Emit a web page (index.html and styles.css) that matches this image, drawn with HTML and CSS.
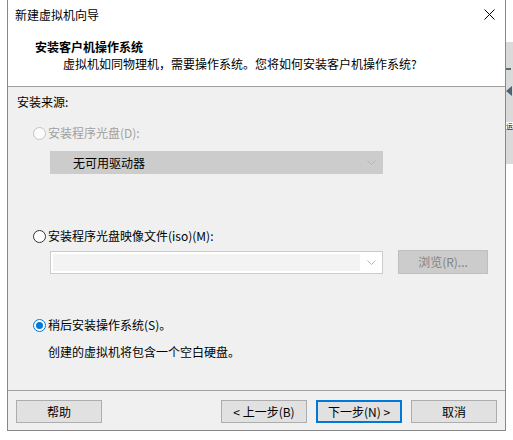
FILE: index.html
```html
<!DOCTYPE html>
<html lang="zh-CN">
<head>
<meta charset="utf-8">
<title>新建虚拟机向导</title>
<link rel="stylesheet" href="styles.css">
</head>
<body>
<div class="screen">
  <div class="dialog">
    <div class="titlebar">
      <span class="title">新建虚拟机向导</span>
      <svg class="close" width="11" height="11" viewBox="0 0 11 11"><path d="M0.5 0.5 L10.5 10.5 M10.5 0.5 L0.5 10.5" stroke="#000" stroke-width="1" fill="none"/></svg>
    </div>
    <div class="header">
      <div class="h-title">安装客户机操作系统</div>
      <div class="h-sub">虚拟机如同物理机，需要操作系统。您将如何安装客户机操作系统?</div>
    </div>
    <div class="content">
      <div class="group-label">安装来源:</div>

      <div class="radio-row r1 disabled">
        <span class="radio"></span><span>安装程序光盘(D):</span>
      </div>
      <div class="select disabled-select">
        <span class="select-text">无可用驱动器</span>
        <svg class="chev" width="9" height="5" viewBox="0 0 9 5"><path d="M0.5 0.5 L4.5 4.5 L8.5 0.5" stroke="#b4b4b4" fill="none"/></svg>
      </div>

      <div class="radio-row r2">
        <span class="radio"></span><span>安装程序光盘映像文件(iso)(M):</span>
      </div>
      <div class="combo-row">
        <div class="combo">
          <div class="combo-field"></div>
          <svg class="chev" width="9" height="5" viewBox="0 0 9 5"><path d="M0.5 0.5 L4.5 4.5 L8.5 0.5" stroke="#b4b4b4" fill="none"/></svg>
        </div>
        <div class="browse">浏览(R)...</div>
      </div>

      <div class="radio-row r3">
        <span class="radio checked"></span><span>稍后安装操作系统(S)。</span>
      </div>
      <div class="note">创建的虚拟机将包含一个空白硬盘。</div>
    </div>
    <div class="footer">
      <div class="btn">帮助</div>
      <div class="spacer"></div>
      <div class="btn">&lt; 上一步(B)</div>
      <div class="btn default">下一步(N) &gt;</div>
      <div class="btn">取消</div>
    </div>
  </div>
  <div class="backwin">
    <span class="bw-line"></span>
    <span class="bw-arrow"></span>
    <span class="bw-text">运</span>
  </div>
</div>
</body>
</html>
```

FILE: styles.css
```css
html, body {
  margin: 0;
  padding: 0;
  background: #ffffff;
}
body {
  font-family: "Noto Sans CJK SC", "Noto Sans", sans-serif;
  font-size: 12px;
  color: #000;
}
.screen {
  display: flex;
  align-items: flex-start;
  width: 513px;
  height: 440px;
  overflow: hidden;
}
.dialog {
  margin-left: 7px;
  width: 497px;
  border: 1px solid #888888;
  border-top: none;
  background: #fff;
  flex: none;
}
.titlebar {
  height: 30px;
  display: flex;
  align-items: center;
  justify-content: space-between;
  padding: 0 10px 0 7px;
  line-height: 16px;
}
.title {
  margin-top: -1px;
}
.close {
  margin-top: -1px;
}
.header {
  height: 57px;
  box-sizing: border-box;
  padding: 8px 0 0 27px;
  border-bottom: 1px solid #a0a0a0;
}
.h-title {
  font-weight: bold;
  line-height: 18px;
}
.h-sub {
  line-height: 16px;
  padding-left: 28px;
}
.content {
  height: 304px;
  box-sizing: border-box;
  background: #f0f0f0;
  border-bottom: 1px solid #a0a0a0;
  padding: 7px 0 0 9px;
  display: flex;
  flex-direction: column;
  align-items: flex-start;
}
.group-label {
  line-height: 16px;
}
.radio-row {
  display: flex;
  align-items: center;
  line-height: 16px;
  height: 16px;
  margin-left: 16px;
}
.radio-row.disabled {
  color: #a0a0a0;
}
.r1 { margin-top: 15px; }
.r2 { margin-top: 54px; }
.r3 { margin-top: 43px; }
.radio {
  width: 11px;
  height: 11px;
  border: 1px solid #333333;
  border-radius: 50%;
  background: #fff;
  margin-right: 2px;
  flex: none;
  position: relative;
}
.disabled .radio {
  border-color: #c4c4c4;
  background: #fbfbfb;
}
.radio.checked {
  border-color: #0078d7;
}
.radio.checked::after {
  content: "";
  position: absolute;
  left: 2px;
  top: 2px;
  width: 7px;
  height: 7px;
  border-radius: 50%;
  background: #0078d7;
}
.select {
  margin-top: 10px;
  margin-left: 33px;
  width: 333px;
  height: 23px;
  box-sizing: border-box;
  display: flex;
  align-items: center;
  justify-content: space-between;
  padding: 0 6px 0 22px;
}
.disabled-select {
  background: #cccccc;
  border: 1px solid #cccccc;
}
.select-text {
  line-height: 16px;
}
.combo-row {
  margin-top: 6px;
  margin-left: 33px;
  display: flex;
  align-items: flex-start;
  gap: 15px;
}
.combo {
  margin-top: 1px;
  width: 333px;
  height: 23px;
  box-sizing: border-box;
  border: 1px solid #cccccc;
  background: #ffffff;
  display: flex;
  align-items: center;
  padding: 2px 6px 2px 2px;
  gap: 0;
}
.combo-field {
  width: 310px;
  height: 17px;
  background: #f3f3f3;
  margin-right: 7px;
}
.browse {
  width: 90px;
  height: 24px;
  box-sizing: border-box;
  background: #cccccc;
  border: 1px solid #bfbfbf;
  color: #838383;
  display: flex;
  align-items: center;
  justify-content: center;
  line-height: 16px;
}
.note {
  margin-top: 11px;
  margin-left: 31px;
  line-height: 16px;
}
.footer {
  height: 39px;
  box-sizing: border-box;
  background: #f0f0f0;
  padding: 9px 8px 0 8px;
  display: flex;
  align-items: flex-start;
  gap: 9px;
}
.spacer {
  flex: 1;
}
.btn {
  width: 86px;
  height: 23px;
  box-sizing: border-box;
  background: #e1e1e1;
  border: 1px solid #adadad;
  display: flex;
  align-items: center;
  justify-content: center;
  line-height: 16px;
}
.btn.default {
  border: 2px solid #0078d7;
}
.backwin {
  margin-top: 42px;
  width: 8px;
  height: 122px;
  background: #dadada;
  flex: none;
  display: flex;
  flex-direction: column;
  align-items: flex-start;
}
.bw-line {
  margin-top: 26px;
  width: 5px;
  height: 2px;
  background: #5a6b78;
}
.bw-arrow {
  margin-top: 16px;
  width: 0;
  height: 0;
  border-top: 5px solid transparent;
  border-bottom: 5px solid transparent;
  border-right: 6px solid #4d6373;
}
.bw-text {
  margin-top: 26px;
  line-height: 8px;
  font-size: 7px;
  width: 8px;
  background: #fff;
}
```
